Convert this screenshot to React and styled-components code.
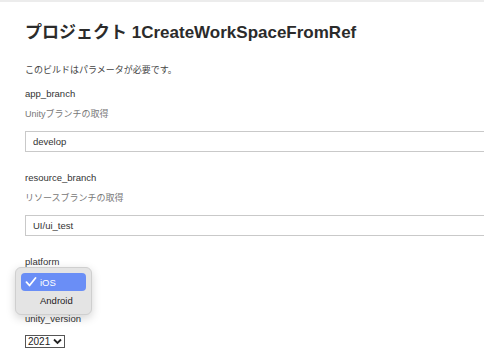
import styled, { createGlobalStyle } from 'styled-components'

const GlobalStyle = createGlobalStyle`
  html, body {
    margin: 0;
    padding: 0;
    background: #ffffff;
  }
  body {
    font-family: "Liberation Sans", "Noto Sans CJK JP", sans-serif;
    color: #333;
  }
`

const Page = styled.div`
  width: 484px;
  height: 358px;
  overflow: hidden;
  border-top: 2px solid #ececec;
  box-sizing: border-box;
  padding: 20px 0 0 25px;
`

const Title = styled.h1`
  margin: 0;
  font-size: 17px;
  line-height: 22px;
  font-weight: bold;
  color: #2b2b2b;
  white-space: nowrap;
`

const Intro = styled.p`
  margin: 19px 0 0;
  font-size: 9px;
  line-height: 14px;
  color: #444;
`

const Param = styled.div`
  margin-top: ${(p) => p.$gap || 19}px;
  display: flex;
  flex-direction: column;
  align-items: flex-start;
`

const Name = styled.div`
  font-size: 9.5px;
  line-height: 14px;
  color: #333;
`

const Desc = styled.div`
  margin-top: 6px;
  font-size: 9px;
  line-height: 14px;
  color: #777;
`

const TextInput = styled.div`
  margin-top: 10px;
  width: 480px;
  height: 21px;
  box-sizing: border-box;
  border: 1px solid #c9c9c9;
  padding: 0 7px;
  display: flex;
  align-items: center;
  font-size: 9.5px;
  color: #333;
`

const SelectWrap = styled.div`
  position: relative;
  margin-top: 9px;
  display: flex;
`

const Select = styled.div`
  display: flex;
  align-items: center;
  gap: 3px;
  height: 13px;
  box-sizing: border-box;
  border: 1px solid #555;
  padding: 0 2px;
  font-size: 10px;
  line-height: 11px;
  color: #222;
  visibility: ${(p) => (p.$covered ? 'hidden' : 'visible')};
`

const Menu = styled.div`
  position: absolute;
  left: -10px;
  top: -11px;
  width: 77px;
  box-sizing: border-box;
  padding: 5px 5px;
  background: #e4e4e4;
  border: 1px solid #cfcfcf;
  border-radius: 6px;
  box-shadow: 0 3px 10px rgba(0, 0, 0, 0.18);
  display: flex;
  flex-direction: column;
`

const MenuItem = styled.div`
  height: 18px;
  display: flex;
  align-items: center;
  padding-left: 4px;
  border-radius: 4px;
  font-size: 9.5px;
  background: ${(p) => (p.$active ? '#6a8ef6' : 'transparent')};
  color: ${(p) => (p.$active ? '#fff' : '#222')};
`

const Check = styled.span`
  width: 13px;
  display: inline-flex;
  margin-right: 2px;
`

const Label = styled.span`
  margin-left: ${(p) => (p.$indent ? 15 : 0)}px;
`

function Chevron() {
  return (
    <svg width="9" height="7" viewBox="0 0 9 7">
      <path d="M1 1.5 L4.5 5 L8 1.5" fill="none" stroke="#222" strokeWidth="1.8" />
    </svg>
  )
}

function CheckMark() {
  return (
    <svg width="12" height="10" viewBox="0 0 12 10">
      <path d="M1.5 5.2 L4.5 8.5 L10.5 1" fill="none" stroke="#fff" strokeWidth="1.8" strokeLinecap="round" strokeLinejoin="round" />
    </svg>
  )
}

export default function App() {
  return (
    <>
      <GlobalStyle />
      <Page>
        <Title>プロジェクト 1CreateWorkSpaceFromRef</Title>
        <Intro>このビルドはパラメータが必要です。</Intro>

        <Param $gap={10}>
          <Name>app_branch</Name>
          <Desc>Unityブランチの取得</Desc>
          <TextInput>develop</TextInput>
        </Param>

        <Param>
          <Name>resource_branch</Name>
          <Desc>リソースブランチの取得</Desc>
          <TextInput>UI/ui_test</TextInput>
        </Param>

        <Param>
          <Name>platform</Name>
          <SelectWrap>
            <Select $covered>
              iOS <Chevron />
            </Select>
            <Menu>
              <MenuItem $active>
                <Check>
                  <CheckMark />
                </Check>
                <Label>iOS</Label>
              </MenuItem>
              <MenuItem>
                <Label $indent>Android</Label>
              </MenuItem>
            </Menu>
          </SelectWrap>
        </Param>

        <Param $gap={21}>
          <Name>unity_version</Name>
          <SelectWrap>
            <Select>
              2021 <Chevron />
            </Select>
          </SelectWrap>
        </Param>
      </Page>
    </>
  )
}
